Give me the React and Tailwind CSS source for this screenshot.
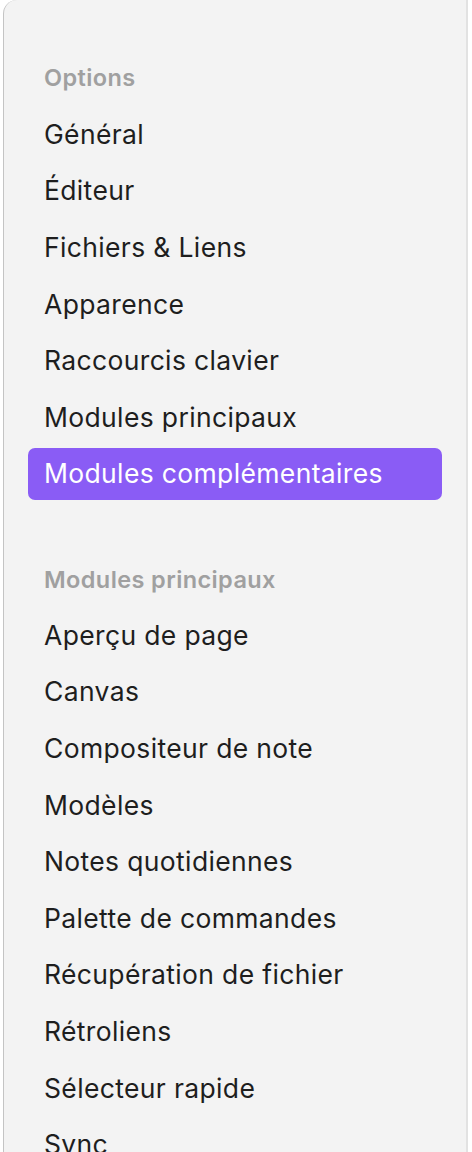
const SECTIONS = [
  {
    title: 'Options',
    items: [
      'Général',
      'Éditeur',
      'Fichiers & Liens',
      'Apparence',
      'Raccourcis clavier',
      'Modules principaux',
      'Modules complémentaires',
    ],
  },
  {
    title: 'Modules principaux',
    items: [
      'Aperçu de page',
      'Canvas',
      'Compositeur de note',
      'Modèles',
      'Notes quotidiennes',
      'Palette de commandes',
      'Récupération de fichier',
      'Rétroliens',
      'Sélecteur rapide',
      'Sync',
    ],
  },
];

const ACTIVE = 'Modules complémentaires';

const App = () => {
  return (
    <div
      className="h-[1152px] w-[472px] overflow-hidden bg-white pl-[3px]"
      style={{ fontFamily: 'Inter, "Noto Sans", sans-serif' }}
    >
      <nav className="h-full w-[465px] rounded-tl-[14px] border-l-[1.5px] border-r-2 border-l-[#c4c4c4] border-r-[#e2e2e2] bg-[#f3f3f3] pt-[52px] pl-[24px] pr-[24px]">
        {SECTIONS.map((section, i) => (
          <div key={section.title} className={i > 0 ? 'mt-[53px]' : ''}>
            <div className="flex h-[52px] items-center px-4 text-[23.5px] font-semibold tracking-[0.4px] text-[#a0a0a0]">
              {section.title}
            </div>
            <ul className="mt-[4.6px] flex flex-col gap-[4.6px]">
              {section.items.map((label) => {
                const active = label === ACTIVE;
                return (
                  <li
                    key={label}
                    className={
                      active
                        ? 'flex h-[52px] items-center rounded-[7px] bg-[#8a5cf5] px-4 text-[26.5px] tracking-[0.35px] text-white'
                        : 'flex h-[52px] items-center rounded-[7px] px-4 text-[26.5px] tracking-[0.35px] text-[#1e1e1e]'
                    }
                  >
                    {label}
                  </li>
                );
              })}
            </ul>
          </div>
        ))}
      </nav>
    </div>
  );
};

export default App;
